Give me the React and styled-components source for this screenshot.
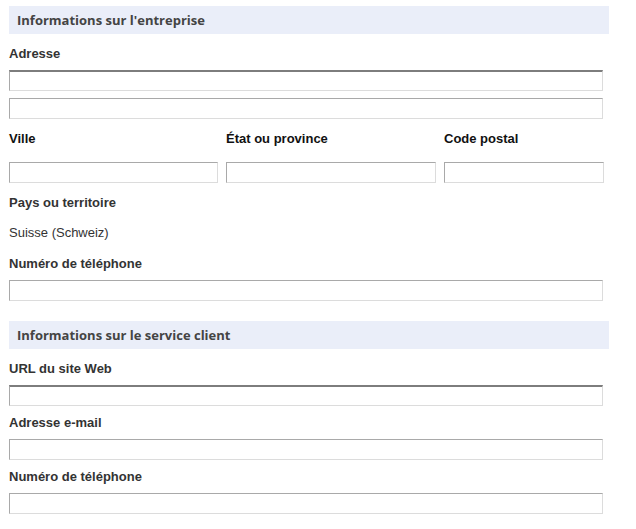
import React from 'react'
import styled, { createGlobalStyle } from 'styled-components'

const Global = createGlobalStyle`
  body {
    margin: 0;
    background: #fff;
    font-family: "Liberation Sans", Arial, sans-serif;
  }
`;

const Page = styled.div`
  width: 636px;
  padding: 6px 0 0 9px;
  box-sizing: border-box;
`;

const Section = styled.section`
  margin-bottom: ${p => p.$after || 0}px;
`;

const SectionHeader = styled.div`
  width: 600px;
  height: 28px;
  box-sizing: border-box;
  background: #eaeef9;
  padding-left: 8px;
  display: flex;
  align-items: center;
  font-family: "Open Sans", sans-serif;
  font-weight: 700;
  font-size: 13px;
  color: #444;
`;

const Label = styled.div`
  font-size: 13px;
  line-height: 15px;
  font-weight: 700;
  color: ${p => (p.$dark ? '#111' : '#333')};
  margin-top: ${p => p.$top || 0}px;
  margin-bottom: ${p => p.$bottom ?? 9}px;
`;

const Value = styled.div`
  font-size: 13px;
  line-height: 15px;
  color: #333;
  margin-top: 15px;
`;

const Input = styled.input`
  display: block;
  width: ${p => p.$w || 594}px;
  height: 21px;
  box-sizing: border-box;
  margin: ${p => p.$top || 0}px 0 0 0;
  padding: 0 4px;
  border-style: solid;
  border-width: ${p => (p.$strong ? 2 : 1)}px 1px 1px 1px;
  border-color: ${p => (p.$strong ? '#7d7d7d' : '#a9a9a9')} #dcdcdc #dcdcdc #a9a9a9;
  background: #fff;
  outline: none;
  font: 13px "Liberation Sans", Arial, sans-serif;
`;

const Row = styled.div`
  display: grid;
  grid-template-columns: 209px 210px 160px;
  column-gap: 8px;
  width: 594px;
  margin-top: 12px;
`;

const Col = styled.div`
  display: flex;
  flex-direction: column;
`;

export default function App() {
  return (
    <>
      <Global />
      <Page>
        <Section $after={20}>
          <SectionHeader>Informations sur l'entreprise</SectionHeader>
          <Label $top={12}>Adresse</Label>
          <Input $strong />
          <Input $top={7} />
          <Row>
            <Col>
              <Label $dark $bottom={16}>Ville</Label>
              <Input $w={209} />
            </Col>
            <Col>
              <Label $dark $bottom={16}>État ou province</Label>
              <Input $w={210} />
            </Col>
            <Col>
              <Label $dark $bottom={16}>Code postal</Label>
              <Input $w={160} />
            </Col>
          </Row>
          <Label $top={12} $bottom={0}>Pays ou territoire</Label>
          <Value>Suisse (Schweiz)</Value>
          <Label $top={16} $bottom={9}>Numéro de téléphone</Label>
          <Input />
        </Section>
        <Section>
          <SectionHeader>Informations sur le service client</SectionHeader>
          <Label $top={12}>URL du site Web</Label>
          <Input $strong />
          <Label $top={9}>Adresse e-mail</Label>
          <Input />
          <Label $top={9}>Numéro de téléphone</Label>
          <Input />
        </Section>
      </Page>
    </>
  )
}
